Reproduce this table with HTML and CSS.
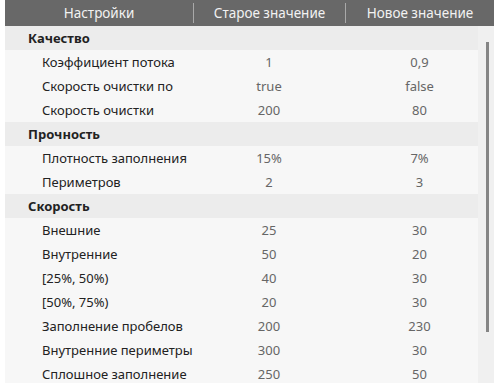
FILE: index.html
```html
<!DOCTYPE html>
<html lang="ru">
<head>
<meta charset="utf-8">
<link rel="stylesheet" href="styles.css">
</head>
<body>
<div class="table">
  <div class="head">
    <div class="hcell">Настройки</div>
    <div class="hcell sep">Старое значение</div>
    <div class="hcell sep">Новое значение</div>
  </div>
  <div class="body">
    <div class="group">Качество</div>
    <div class="row"><span class="name">Коэффициент потока</span><span class="val">1</span><span class="val">0,9</span></div>
    <div class="row"><span class="name">Скорость очистки по</span><span class="val">true</span><span class="val">false</span></div>
    <div class="row"><span class="name">Скорость очистки</span><span class="val">200</span><span class="val">80</span></div>
    <div class="group">Прочность</div>
    <div class="row"><span class="name">Плотность заполнения</span><span class="val">15%</span><span class="val">7%</span></div>
    <div class="row"><span class="name">Периметров</span><span class="val">2</span><span class="val">3</span></div>
    <div class="group">Скорость</div>
    <div class="row"><span class="name">Внешние</span><span class="val">25</span><span class="val">30</span></div>
    <div class="row"><span class="name">Внутренние</span><span class="val">50</span><span class="val">20</span></div>
    <div class="row"><span class="name">[25%, 50%)</span><span class="val">40</span><span class="val">30</span></div>
    <div class="row"><span class="name">[50%, 75%)</span><span class="val">20</span><span class="val">30</span></div>
    <div class="row"><span class="name">Заполнение пробелов</span><span class="val">200</span><span class="val">230</span></div>
    <div class="row"><span class="name">Внутренние периметры</span><span class="val">300</span><span class="val">30</span></div>
    <div class="row"><span class="name">Сплошное заполнение</span><span class="val">250</span><span class="val">50</span></div>
    <div class="scrollbar"><div class="thumb"></div></div>
  </div>
</div>
</body>
</html>
```
FILE: styles.css
```css
html, body {
  margin: 0;
  padding: 0;
  background: #ffffff;
  overflow: hidden;
}
body {
  font-family: "Noto Sans", "Open Sans", sans-serif;
  font-size: 13px;
  color: #2a2a2a;
}
.table {
  margin-left: 5px;
  width: 489px;
}
.head {
  display: grid;
  grid-template-columns: 188px 152px 149px;
  height: 26px;
  background: #686868;
  color: #f2f2f2;
}
.hcell {
  display: flex;
  align-items: center;
  justify-content: center;
  position: relative;
  font-size: 13.5px;
}
.hcell.sep {
  border-left: 1px solid #a9a9a9;
  margin: 3px 0;
}
.body {
  position: relative;
}
.group {
  height: 24px;
  line-height: 24px;
  background: #ececec;
  padding-left: 23px;
  font-weight: bold;
  color: #222;
}
.row {
  display: grid;
  grid-template-columns: 188px 152px 149px;
  height: 24px;
  line-height: 24px;
  background: #f7f7f7;
}
.name {
  padding-left: 37px;
  color: #222;
}
.val {
  text-align: center;
  color: #666;
}
.row .val:first-of-type {
  padding-left: 1px;
}
.scrollbar {
  position: absolute;
  top: 0;
  right: 0;
  width: 16px;
  bottom: 0;
  background: #f0f0f0;
}
.thumb {
  position: absolute;
  left: 8px;
  top: 16px;
  width: 3px;
  height: 290px;
  background: #858585;
}
```
